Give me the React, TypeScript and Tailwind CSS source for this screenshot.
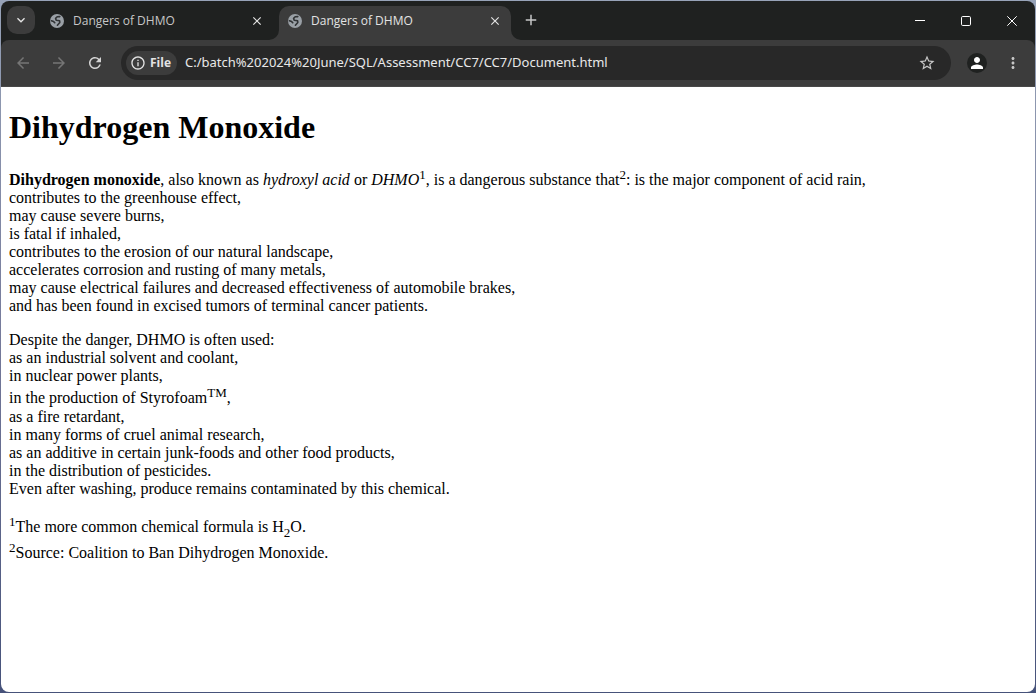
import { useState } from 'react';
import {
  MdAdd,
  MdArrowBack,
  MdArrowForward,
  MdClose,
  MdInfoOutline,
  MdKeyboardArrowDown,
  MdMoreVert,
  MdPerson,
  MdRefresh,
  MdStarBorder,
} from 'react-icons/md';

function Globe() {
  return (
    <svg viewBox="0 0 16 16" className="size-4 shrink-0" aria-hidden="true">
      <circle cx="8" cy="8" r="7" fill="#9aa0a6" />
      <g fill="none" stroke="#303335" strokeWidth="1.6" strokeLinecap="round" strokeLinejoin="round">
        <path d="M10.8 3.6L8.2 3.8L6.6 5.4L7.2 7.2L10.6 7.8L10.8 9.4L8.4 12.2" />
        <path d="M2.4 7.8L4.6 8.6L5.8 9.8" />
      </g>
    </svg>
  );
}

function Flare({ side }: { side: 'left' | 'right' }) {
  return (
    <svg
      viewBox="0 0 10 10"
      className={
        side === 'left'
          ? 'absolute bottom-0 -left-2.5 size-2.5'
          : 'absolute bottom-0 -right-2.5 size-2.5'
      }
      aria-hidden="true"
    >
      <path d={side === 'left' ? 'M10 0A10 10 0 0 1 0 10H10Z' : 'M0 0A10 10 0 0 0 10 10H0Z'} fill="#3c3c3c" />
    </svg>
  );
}

function Tab({ title, active }: { title: string; active?: boolean }) {
  return (
    <div
      className={
        active
          ? 'relative flex h-[34px] w-[232px] items-center rounded-t-[10px] bg-[#3c3c3c] px-2 pb-1 text-[#e3e3e3]'
          : 'relative flex h-[34px] w-[232px] items-center px-2 pb-1 text-[#c7c7c7]'
      }
    >
      {active && <Flare side="left" />}
      <Globe />
      <span className="ml-2 flex-1 text-[12px] whitespace-nowrap">{title}</span>
      <button type="button" aria-label="Close tab" className="flex size-4 items-center justify-center text-[#e3e3e3]">
        <MdClose className="size-3.5" />
      </button>
      {active && <Flare side="right" />}
    </div>
  );
}

function TitleBar() {
  return (
    <header className="flex h-[39px] items-end bg-[#1f2120]">
      <button
        type="button"
        aria-label="Search tabs"
        className="mb-[6px] ml-[6px] flex size-7 items-center justify-center rounded-[10px] bg-[#3c3c3c] text-[#e3e3e3]"
      >
        <MdKeyboardArrowDown className="size-4" />
      </button>
      <div className="ml-[6px] flex gap-[6px]">
        <Tab title="Dangers of DHMO" />
        <Tab title="Dangers of DHMO" active />
      </div>
      <button
        type="button"
        aria-label="New tab"
        className="mb-[6px] ml-[6px] flex size-7 items-center justify-center text-[#c7c7c7]"
      >
        <MdAdd className="size-[18px]" />
      </button>
      <div className="ml-auto flex h-full text-white">
        <button type="button" aria-label="Minimize" className="flex w-[46px] items-center justify-center">
          <svg viewBox="0 0 10 10" className="size-2.5" fill="none" stroke="currentColor">
            <path d="M0 4.5H10" />
          </svg>
        </button>
        <button type="button" aria-label="Maximize" className="flex w-[46px] items-center justify-center">
          <svg viewBox="0 0 10 10" className="size-2.5" fill="none" stroke="currentColor">
            <rect x=".5" y=".5" width="9" height="9" rx="1.2" />
          </svg>
        </button>
        <button type="button" aria-label="Close" className="flex w-[46px] items-center justify-center">
          <svg viewBox="0 0 10 10" className="size-2.5" fill="none" stroke="currentColor">
            <path d="M.3 .3L9.7 9.7M9.7 .3L.3 9.7" />
          </svg>
        </button>
      </div>
    </header>
  );
}

function Toolbar() {
  const [url, setUrl] = useState('C:/batch%202024%20June/SQL/Assessment/CC7/CC7/Document.html');
  return (
    <div className="bg-[#1f2120]">
      <div className="flex h-[47px] items-center rounded-t-lg border-b border-[#484848] bg-[#3c3c3c] px-[13px]">
        <div className="flex gap-[18px] text-[#757575]">
          <button type="button" aria-label="Back">
            <MdArrowBack className="size-[18px]" />
          </button>
          <button type="button" aria-label="Forward">
            <MdArrowForward className="size-[18px]" />
          </button>
          <button type="button" aria-label="Reload" className="text-[#d4d4d4]">
            <MdRefresh className="size-[18px]" />
          </button>
        </div>
        <div className="ml-[17px] flex h-[34px] flex-1 items-center rounded-full bg-[#282828] pr-[15px] pl-[5px]">
          <button
            type="button"
            className="flex h-6 w-[51px] items-center gap-1 rounded-full bg-[#3c3c3c] pl-1 text-[12px] font-bold text-[#e3e3e3]"
          >
            <MdInfoOutline className="size-4 shrink-0" />
            File
          </button>
          <input
            aria-label="Address"
            value={url}
            onChange={(e) => setUrl(e.target.value)}
            className="ml-2 min-w-0 flex-1 bg-transparent font-['Noto_Sans','Segoe_UI',sans-serif] text-[13px] text-[#e8e8e8] outline-none"
          />
          <button type="button" aria-label="Bookmark this page" className="text-[#c7c7c7]">
            <MdStarBorder className="size-[18px]" />
          </button>
        </div>
        <button
          type="button"
          aria-label="Profile"
          className="ml-4 flex size-5 items-center justify-center rounded-full bg-[#1f2120] text-white"
        >
          <MdPerson className="size-[18px]" />
        </button>
        <button type="button" aria-label="Menu" className="ml-[17px] text-[#c7c7c7]">
          <MdMoreVert className="size-[18px]" />
        </button>
      </div>
    </div>
  );
}

const script = 'static align-super text-[13px] leading-[normal]';

function Document() {
  return (
    <main className="flex-1 bg-white px-2 font-['Liberation_Serif','Times_New_Roman',serif] text-[16px] leading-[normal] text-black">
      <h1 className="mt-[22px] mb-[21px] text-[32px] leading-[normal] font-bold">Dihydrogen Monoxide</h1>
      <p className="mb-4">
        <strong>Dihydrogen monoxide</strong>, also known as <em>hydroxyl acid</em> or <em>DHMO</em>
        <sup className={script}>1</sup>, is a dangerous substance that<sup className={script}>2</sup>: is the
        major component of acid rain,
        <br />
        contributes to the greenhouse effect,
        <br />
        may cause severe burns,
        <br />
        is fatal if inhaled,
        <br />
        contributes to the erosion of our natural landscape,
        <br />
        accelerates corrosion and rusting of many metals,
        <br />
        may cause electrical failures and decreased effectiveness of automobile brakes,
        <br />
        and has been found in excised tumors of terminal cancer patients.
      </p>
      <p className="mb-4">
        Despite the danger, DHMO is often used:
        <br />
        as an industrial solvent and coolant,
        <br />
        in nuclear power plants,
        <br />
        in the production of Styrofoam<sup className={script}>TM</sup>,
        <br />
        as a fire retardant,
        <br />
        in many forms of cruel animal research,
        <br />
        as an additive in certain junk-foods and other food products,
        <br />
        in the distribution of pesticides.
        <br />
        Even after washing, produce remains contaminated by this chemical.
      </p>
      <p>
        <sup className={script}>1</sup>The more common chemical formula is H
        <sub className="static align-sub text-[13px] leading-[normal]">2</sub>O.
        <br />
        <sup className={script}>2</sup>Source: Coalition to Ban Dihydrogen Monoxide.
      </p>
    </main>
  );
}

export default function App() {
  return (
    <div className="flex min-h-screen flex-col bg-linear-to-b from-[#97a3b8] via-[#74799a] to-[#46527a] font-['Open_Sans','Segoe_UI',sans-serif]">
      <div className="m-px flex flex-1 flex-col overflow-hidden rounded-lg">
        <TitleBar />
        <Toolbar />
        <Document />
      </div>
    </div>
  );
}
